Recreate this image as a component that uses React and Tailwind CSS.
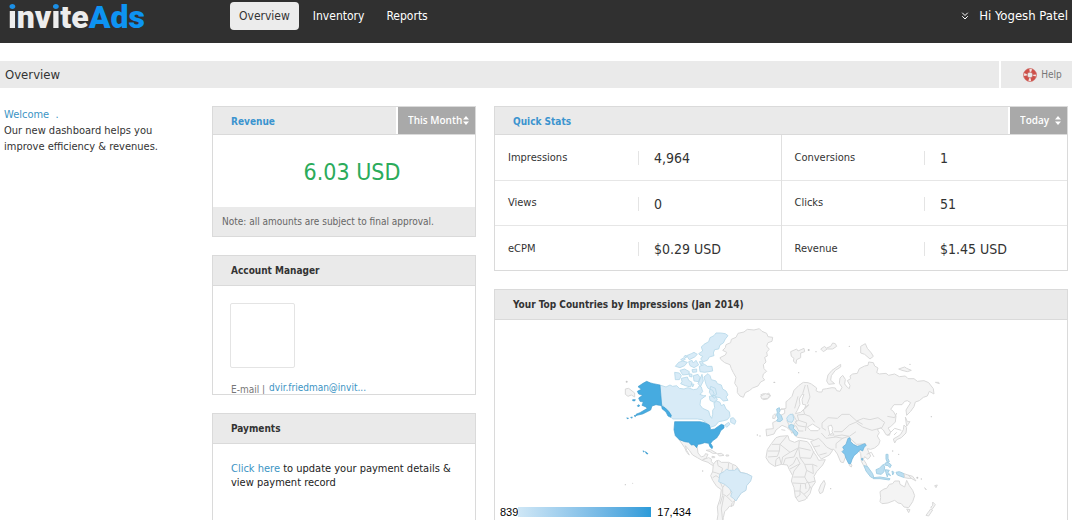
import { ChevronsDown } from "lucide-react";

const NAV = ["Overview", "Inventory", "Reports"];

const STATS = [
  [["Impressions", "4,964"], ["Conversions", "1"]],
  [["Views", "0"], ["Clicks", "51"]],
  [["eCPM", "$0.29 USD"], ["Revenue", "$1.45 USD"]],
];

function Logo() {
  return (
    <a href="#home" className="-mt-0.5 flex w-[230px] shrink-0 pl-2 font-['Roboto',sans-serif] text-[32px] leading-[38px] font-black text-[#ededed]">
      <span className="bg-linear-to-b from-[#1b8fe6] from-35% to-[#ededed] to-35% bg-clip-text text-transparent">i</span>
      <span>nv</span>
      <span className="bg-linear-to-b from-[#1b8fe6] from-35% to-[#ededed] to-35% bg-clip-text text-transparent">i</span>
      <span>te</span>
      <span className="text-[#0d93f2]">Ads</span>
    </a>
  );
}

function LifeBuoyIcon() {
  return (
    <svg viewBox="0 0 14 14" className="size-3.5" aria-hidden="true">
      <circle cx="7" cy="7" r="4.7" fill="none" stroke="#cf5049" strokeWidth="3.6" />
      <circle cx="7" cy="7" r="4.7" fill="none" stroke="#f4e4e2" strokeWidth="3.6" strokeDasharray="2.2 5.18" strokeDashoffset="1.1" />
      <circle cx="7" cy="7" r="6.5" fill="none" stroke="#c9605a" strokeWidth="0.6" />
      <circle cx="7" cy="7" r="2.9" fill="none" stroke="#b5453f" strokeWidth="0.6" />
    </svg>
  );
}

function SortArrows() {
  return (
    <svg viewBox="0 0 6 9" className="pointer-events-none absolute top-[9px] right-1.5 h-[9px] w-1.5" aria-hidden="true">
      <path d="M0 3.5 3 0l3 3.5zM0 5.5h6L3 9z" fill="#fff" />
    </svg>
  );
}

function PeriodSelect({ label, options, width }) {
  return (
    <div className={`relative border-l-2 border-white ${width}`}>
      <select
        aria-label={label}
        className="h-full w-full cursor-pointer appearance-none bg-[#a9a9a9] pl-2.5 font-['Open_Sans',sans-serif] text-[10px] font-semibold text-white"
      >
        {options.map((o) => (
          <option key={o}>{o}</option>
        ))}
      </select>
      <SortArrows />
    </div>
  );
}

function Panel({ title, blue, action, className = "", children }) {
  return (
    <section className={`border border-[#dadada] ${className}`}>
      <header className={`flex justify-between border-b border-[#dadada] bg-[#eaeaea] ${action ? "h-7" : "h-[30px]"}`}>
        <h2 className={`self-center pl-[18px] text-[10px] font-bold ${blue ? "pt-0.5 text-[#3b94cf]" : "text-[#333]"}`}>{title}</h2>
        {action}
      </header>
      {children}
    </section>
  );
}

function WorldMap() {
  return (
    <svg viewBox="0 0 340 201" className="ml-[115px] h-[201px] w-[340px]" role="img" aria-label="World map of impressions by country">
      <g transform="translate(0 1) scale(.33333)" strokeLinejoin="round" strokeWidth="3" fill="#f4f4f4" stroke="#d9d9d9">
        <path d="M330 110l16-8 4-8-12-6 8-8 2-9 14-6 2-10 14-6 6-12 18-4 10-8 20 2 16-4 8 8 14 6 4 10 14 2-2 12-12 4-4 10 8 10-8 8 2 12-8 4 4 14-8 8 2 12 8 8-10 8-2 10 6 8-12 6-8 12-16 6-10 8-12 6-6 14-10-4-8-10 0-16-8-12 4-18-8-14-6-12-4-12-16-6-12-10zM452 222l8-4 10 2 6-4 6 9-10 9-12 2 2-6zM46 204l10-2 18 14 0 12-10-6-10 4-8-6zM206 354l16 6 14 2 8 8 10 2 8 8 2 16 10 12 10-4 2-6 8 2-6 12-10 4 18-6 8 4 0 8 8 8 8 2-6 4-12-6-8-6-18-6-14-8-14-8-10-14-12-14 4 14 8 14-8-8-6-14zM288 388l14-2 18 11-12 0-8-5zM322 398l12-1 8 6-14 2zM306 406l8 1 0 3-8 0zM348 402l8 0 0 3-8 0z" />
        <path d="M310 430l8-10 8-2 8 6 22 0 12 6 10 4 8 10 6 10 18 4 14 8-4 14-12 14-2 14-14 8-8 14-10 10-4 14-12 2-6 8-8 8-4 18-2 16h-18l4-26-2-22 8-24 4-28-14-10-12-18-6-14 6-12z" />
        <path d="M322 418l2 16 14 8-4 14M306 452l14 4 10 4M308 470l10-6 12 8M356 426l-2 20M368 432l0 16M380 440l-4 8M328 478l10 22 0 24-8 26M338 500l8-12 16 14 0 14-12 10-10-6M342 524l-8 40 4 34M350 526l18 18 8-6M366 546l-2 12" fill="none" />

        <g fill="#d8ebf7" stroke="#b6d8e9" strokeWidth="2.5">
          <path d="M150 192l18 6 12-6 8 4 12-2 8 8 14 2 12-4 16 6 12-2 6-10 6 4 4 14-8 8 10 4 8 0-16 12-2 16 8 10 18 8 4 14 5 8 3-12 0-12 6-8-2-14 8-6 10 4 4 10 8-4 6 14 10 8 2 14-8 10-14 4-12 2-10 12-18 6-8-14-14-10-14-2h-74l-10-12-10-16-10-14-16-10zM362 292l8-2 8 10-4 10-12-6zM344 312l12-8 4 6-10 9z" />
          <path d="M282 168l12-10 6 6 4 12 14 4 4 8 12 4 4 12 10 6 6 12-6 6 6 10-14 2-10-10-12-2-6 4-6-8 6-6-4-10-14-6-6-12zM214 172l18-4 4 10 10 6-4 14-16-4-14-6 4-6zM194 154l14 2 6 8-6 12-12 0zM250 164l14-4 6 10-4 12-14-2zM276 160l4 20-8 16-8-8zM302 196l14 6 4 18-14 6-8-12zM298 226l18-2 6 12-10 8-12-6zM210 148l14-4 14 8-2 8-18 2zM196 136l10-12 12-4 14 4-8 10-14 6zM230 104l14-6 8-4 10 6-8 8-16 8zM236 122l10-4 4 8 8-8 8 14-14 8-12-6zM268 136l16-6 8 6 14 0 2 14-24 4-14-2zM266 98l12-8-4-12 8-8 14-8 4-12 12-6 6-8 14 0 14 2 8 6-8 10-6 12-10 6-4 12-12 2-4 10 2 8-14 4-6 10-12 4-8-8 6-8-8-4zM246 146l14-2 0 9-12 1zM212 116l10-6 4 5-8 4zM222 106l6-3 3 5-6 2zM238 158l8 2 0 8-8-2zM268 122l8-2 4 8-8 3zM244 188l8 2-4 8z" />
        </g>
        <path d="M330 458l12-6 8-8 6 4 18 0 8-6 8 12 20 4 16 8-4 14-12 14-2 14-14 8-10 14-6 10-8-8-8-6 4-12-8-12-14-12-18-8z" fill="#d8ebf7" stroke="#bdd9e9" />
        <g fill="#46abe0" stroke="#3e9ccf" strokeWidth="2">
          <path d="M150 192l-20-4-8-2-12-5-11 6-15 10 10 8-12 6 4 8 12 4-12 8 4 10 10 2-4 10 10 4 6 5-10 6-12 7-12 5 2 3 18-4 16-8 8-4 4-12 12-4 10 2 8 2 10 6 10 10 8 12-2 6-8-4-6-12-12-10zM68 236l8 0-2 4-6-1zM82 254l5-3 2 4-5 2zM72 284l8-1-4 4zM62 289l5-1-2 4zM50 291l5 0-1 3zM100 389l3 3-3 1zM106 392l6 4 2 3-5-1z" />
          <path d="M194 302h76l14 3 14 7 4 14 12-2 8-6 12-8 8 3 0 8-10 8-4 10-8 12-12 8-6 8 6 10-2 6-6-6-4-10-12-2-12 4-8 1-4 10-8-9-8 1-8-8-12-2-16-6-12-12-4-18z" />
        </g>
        <g fill="#c8c8c8" stroke="none">
          <circle cx="50" cy="182" r="3" /><circle cx="46" cy="491" r="2" /><circle cx="68" cy="487" r="1.5" /><circle cx="278" cy="450" r="2" /><circle cx="442" cy="342" r="2" /><circle cx="450" cy="345" r="2" /><circle cx="492" cy="184" r="2" />
        </g>

        <g transform="translate(450 0)">
          <path d="M78 262l0-20 6-4 12-12 6-18 14-14 14-10 14 1 10 4 16 12-2 8 8 4 10 0 2-8 12-2 16-3 10 1 4 8 10 2 6-12-8-12 2-16 8-8 8 12-2 14 8 10 6 4 2-10-8-14 10-6-2-8 8-6 14-2 6-14 16-8 10-2 2-10 14 2 4 10 10 6-4 14 8 4 20-2 8 6 18-4 14 8 18-2 8 8 18 0 10 8 20-2 14 6 14 18 2 16-14-8-6 14-12 4-12 10-12 4-4 14-10 14-12 12-2-16 14-22-10-6-8 2-8 10-24 0-10 14 8 6 8 14-2 18-14 14-8 4 8 12-4 10-10-2-8-14-8-6-10 4 6 10-6 10 8 14-4 12-12 10-12 4-10-2 4 10 6 12-8 10-10-8-4 8 8 12 6 16-10-4-10-18-2-24-10-14-16 4-18 18-8 20-8-2-10-24-10-14-18 0-18-4-12-12-14-12-20-4-28-4-8-6-4-12-4 6-4-8-12-10-14-6-10 8-8 6-6 12-22 6-2-20 22-2-2-18 16-8 8-14 12-6 0-12-10-2-4 4z" />
          <path d="M152 362l24-10 12 12 12 14 18 10-10 14-24 12-10-12-12-22z" />
          <path d="M48 350l12-4 24-2 4 14 16 6 14-6 24 4 10 12 8 18 10 14 6 12 20-2-8 16-18 20-8 14 4 18-10 14-6 20-14 18-20 6-10-14-4-28-8-20 4-16-10-18-6-14-18-2-20 6-16-10-10-16 4-24 12-18zM192 478l4 10-8 26-8 4-4-10 6-16z" />
          <path d="M360 512l12-8 8-2 8-12 10-2 6-8 14 0 2 10 14 8 6-20 8 16 10 14 6 16-6 18-12 18-14-2-8-10-10-2-10-8-20 8-18 2-6-6 2-12zM440 564l10 2-4 9zM518 543l8 8-8 12-6-4 6-6zM512 564l6 3-12 18-8-2zM400 354l14-8 8-6 8-14 2-14 8 8-2 16-14 14-14 6-6 10zM436 288l6 14 8 0-10 14zM2 226l14-8 14 4-6 10-18 2zM206 190l-6-10 4-18 12-14 26-18 0 8-16 10-12 16-2 14 12 10zM302 76l14-8 6 14 12 14 6 10-10 8-16-14-12-4zM416 144l18-6 6 4 14 6-12 4-16-4zM92 92l18-8 4 6 18-8 2 10-12 4 0 14-12 6-2 12-8-8 2-8-8-6zM182 84l12-8 4 6 14-6 6-10 8 2 4 8-12 8-16 0-12 8zM444 462l14 4 10 14-18-10zM526 184l10 0 2 4zM268 426l8 6-2 6-6-4zM494 500l5 7zM524 494l8-2-4 8z" />
          <path d="M112 268l8-18-2-16 8-14 6 0-6 16 2 14 10 2-4 10-12 12-16 4zM142 318l16-9 10 7 12 7-6 6-22 0zM204 316l10-4 4 10-2 10 6 10-12 0-4-16z" fill="#fff" />
          <path d="M114 226l-10 36M128 218l8-26M142 248l8-20-8-36M146 250l-16 16 4 14 16 6 14 18M134 280l-22 2 4 16 24 8M116 298l-10 4 8 12 24 4M80 298l8 16M64 326l12 2M98 278l12 22-12 16M186 306l18-16 28 2 14-12 22 0 22 20 18 10M186 306l0 14 12 8M290 300l20-8 20 4 24-6 20 14-8 16-30 8-28-10-18-12M222 332l24 0 22-20 28-12M218 336l-14 8M222 346l24-4 22 4 20-14M184 336l14 16 30-4 20 4 18-6M228 382l0-14 22-18M382 286l22 4 6-14M382 344l22-22 20 6M402 342l8-8M268 350l22 20 28-2M320 400l14-6 8 14M160 378l20-4M178 402l22-6M132 266l14-14M84 320l24-6 8 16 14 0M140 306l-4 24" fill="none" />
          <path d="M36 370l24 0 20-24M60 370l-2 20-34 0M60 370l30 24 26-14 2-20M116 380l36 8M24 408l28-2 6-16M46 436l2-20 10-8 6 22M64 430l4-22 22-14M70 430l6-18 26-4 12-26M88 436l12-8 10-20M110 408l10 20-30 16M116 380l4 30 32 2 10-22M120 410l14 20 24 0 14 6M120 428l-18 22-4 14M134 430l6 18 20 10M140 448l-6 20-34 0M158 430l2 28M134 468l10 18 22-6M98 486l38 2 8-6 8 20M104 510l16 0 2-20M120 510l0 12-12 8M120 510l12 10 14-12 4-12M132 520l10 12M136 488l2 16" fill="none" />
          <g fill="#bbdef1" stroke="#a4cfe4">
            <path d="M50 264l8-4 2 10-4 6 8 8 4 12-8 6-10-2 4-8-4-10 2-8zM86 314l8-4 8 4-2 8 14 14-4 8-6-2-6-12-10-8zM378 400l6 0 0 12 4 10-6 2-4-10zM376 426l8-2 10 8-4 8-6-6-10-2zM312 434l10 2 16 22 4 14-10-4-14-18zM340 470l20-2 30 5-2 4-28-4-20 0zM348 446l10-4 12-12 4 8-2 14-8 8-14-2zM376 446l12 2-4 6 8 10-8-4-2 8-4-12zM396 450l6 4-4 8zM408 454l10-2 14 6 2 12-12-4-10-4z" />
          </g>
          <path d="M39 284l6-6 2 8-3 7-6-1z" />
          <path d="M84 286l6-6 8 0 4 14-6 10-12-2-4-10z" fill="#d8ebf7" stroke="#b6d8e9" />
          <path d="M264 352l6-2 2 12 8 8 12 6 6-2 16-6 5 4-7 8-4 10-8-4-6 8-12 10-6 12-4 12-6 0-8-16-4-12-8-8 6-6-4-8 10-8zM305 412l3 0 0 6-3-1z" fill="#80c5ec" stroke="#64acd4" strokeWidth="2" />
          <path d="M432 458l12 4 10 10-10 0-10-2z" />
          <g fill="#c8c8c8" stroke="none">
            <circle cx="44" cy="184" r="2" /><circle cx="268" cy="76" r="2" /><circle cx="146" cy="87" r="3" /><circle cx="168" cy="92" r="2" /><circle cx="116" cy="155" r="2" /><circle cx="514" cy="287" r="2" /><circle cx="398" cy="390" r="2" /><circle cx="212" cy="503" r="2" /><circle cx="416" cy="400" r="2" /><circle cx="472" cy="470" r="3" /><circle cx="484" cy="474" r="2" /><circle cx="450" cy="130" r="2" />
          </g>
        </g>
      </g>
    </svg>
  );
}

export default function App() {
  return (
    <div className="flex h-screen flex-col overflow-hidden bg-white font-['DejaVu_Sans_Condensed','DejaVu_Sans',sans-serif] text-[11px] text-[#333]">
      <header className="flex h-[43px] shrink-0 items-start bg-[#303030] text-xs text-white">
        <Logo />
        <nav className="flex gap-1.5 pt-0.5">
          {NAV.map((item, i) => (
            <a key={item} href={`#${item}`} className={`rounded leading-7 ${i === 0 ? "bg-[#ececec] px-[9px] text-[#333]" : "px-2"}`}>
              {item}
            </a>
          ))}
        </nav>
        <button className="mt-0.5 mr-1 ml-auto flex h-7 items-center gap-2 text-[13px]">
          <ChevronsDown className="size-3" strokeWidth={2} />
          Hi Yogesh Patel
        </button>
      </header>

      <div className="mt-[18px] flex h-[27px] shrink-0 gap-0.5">
        <h1 className="flex-1 bg-[#eaeaea] pl-[5px] text-[13px] leading-7">Overview</h1>
        <a href="#help" className="flex w-[71px] items-center justify-center gap-1 bg-[#eaeaea] pl-3 text-[10px] text-[#777]">
          <LifeBuoyIcon />
          Help
        </a>
      </div>

      <main className="mt-[18px] mr-1 flex flex-1 gap-[18px]">
        <aside className="w-[194px] shrink-0 pt-px pl-1 leading-4">
          <p className="text-[#3b94c4]">Welcome&nbsp; .</p>
          <p>Our new dashboard helps you improve efficiency &amp; revenues.</p>
        </aside>

        <div className="flex w-[264px] shrink-0 flex-col gap-[18px]">
          <Panel title="Revenue" blue action={<PeriodSelect label="Revenue period" options={["This Month", "Today"]} width="w-[79px]" />}>
            <p className="pt-0.5 pl-4 text-center text-[23px] leading-[70px] text-[#2bab5b]">6.03 USD</p>
            <p className="bg-[#eaeaea] pl-[9px] text-[10px] leading-[29px] text-[#666]">Note: all amounts are subject to final approval.</p>
          </Panel>

          <Panel title="Account Manager" className="h-[140px] shrink-0 overflow-hidden">
            <div className="mt-[17px] ml-[17px] size-[65px] rounded-xs border border-[#e4e4e4]" />
            <p className="mt-3 ml-[18px] flex gap-1 text-[10px] leading-4 text-[#777]">
              <span className="pt-0.5">E-mail |</span>
              <a href="#email" className="text-[#3b94c4]">dvir.friedman@invit...</a>
            </p>
          </Panel>

          <Panel title="Payments" className="flex-1 border-b-0">
            <p className="px-[18px] pt-[18px] leading-[14px] text-[#222]">
              <a href="#payments" className="text-[#3b94c4]">Click here</a> to update your payment details &amp; view payment record
            </p>
          </Panel>
        </div>

        <div className="flex min-w-0 flex-1 flex-col gap-[18px]">
          <Panel title="Quick Stats" blue action={<PeriodSelect label="Stats period" options={["Today", "This Month"]} width="w-[59px]" />}>
            <table className="w-full table-fixed">
              <tbody className="divide-y divide-[#e6e6e6]">
                {STATS.map((row) => (
                  <tr key={row[0][0]} className="h-[45px]">
                    {row.map(([label, value], i) => [
                      <th key={label} scope="row" className={`w-1/4 pt-0.5 pl-[13px] text-left font-normal ${i ? "border-l border-[#e0e0e0]" : ""}`}>
                        {label}
                      </th>,
                      <td key={`${label}-value`} className="w-1/4 pt-0.5 text-sm">
                        <span className="block border-l border-[#e4e4e4] pl-[15px] leading-3.5">{value}</span>
                      </td>,
                    ])}
                  </tr>
                ))}
              </tbody>
            </table>
          </Panel>

          <Panel title="Your Top Countries by Impressions (Jan 2014)" className="min-h-0 flex-1 border-b-0">
            <div className="relative">
              <WorldMap />
              <div className="absolute bottom-0.5 left-[5px] flex items-center font-['Liberation_Sans',sans-serif] text-[11px] leading-[14px] text-black">
                <span>839</span>
                <span className="mr-1.5 h-2.5 w-[133px] bg-linear-to-r from-[#cfe7f6] to-[#2b9bd9]" />
                <span>17,434</span>
              </div>
            </div>
          </Panel>
        </div>
      </main>
    </div>
  );
}
